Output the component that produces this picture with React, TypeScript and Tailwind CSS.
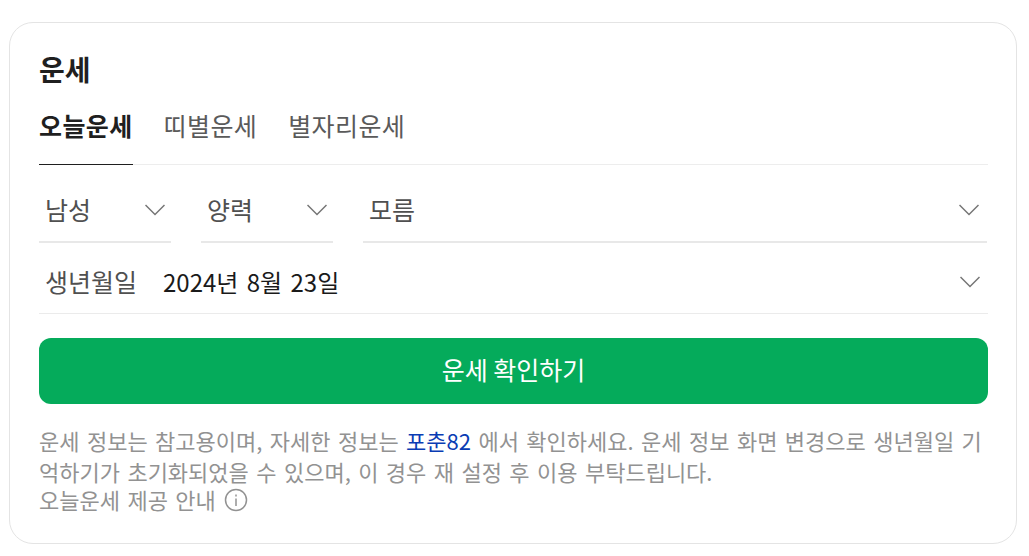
const font = { fontFamily: '"Noto Sans CJK KR", "Noto Sans", sans-serif' };

const Chevron = () => (
    <svg width="20" height="12" viewBox="0 0 20 12" fill="none" className="shrink-0">
        <path d="M0.5 1L10 10.5L19.5 1" stroke="#767676" strokeWidth="1.5" />
    </svg>
);

const SelectBox = ({ label, className }: { label: string; className: string }) => (
    <div className={`flex items-center justify-between h-[78px] pt-[13px] pl-[6px] border-b-2 border-[#e8e8e8] ${className}`}>
        <span className="text-[25px] text-[#505050]">{label}</span>
        <Chevron />
    </div>
);

export default function App() {
    return (
        <div className="bg-white min-h-[556px] pt-[22px] pl-[9px] pr-[12px]" style={font}>
            <div className="h-[522px] border border-[#e4e4e4] rounded-[24px] pl-[29px] pr-[28px] pt-[24px]">
                <h2 className="text-[28px] leading-[44px] font-bold text-[#1f1f1f]">운세</h2>

                {/* Tabs */}
                <div className="flex gap-[31px] h-[74px] border-b border-[#ededed] text-[25px] tracking-[0.4px]">
                    <div className="font-bold text-[#1f1f1f] border-b border-[#1f1f1f] h-[74px] pt-[8px] leading-[52px]">오늘운세</div>
                    <div className="text-[#5a5a5a] pt-[8px] leading-[52px]">띠별운세</div>
                    <div className="text-[#5a5a5a] pt-[8px] leading-[52px]">별자리운세</div>
                </div>

                {/* Filters */}
                <div className="flex gap-[30px] pr-[1px]">
                    <SelectBox label="남성" className="w-[132px] pr-[6px]" />
                    <SelectBox label="양력" className="w-[132px] pr-[6px]" />
                    <SelectBox label="모름" className="flex-1 pr-[8px]" />
                </div>

                {/* Birth date */}
                <div className="flex items-center h-[71px] pt-[8px] pl-[6px] pr-[8px] border-b border-[#ebebeb]">
                    <span className="text-[25px] text-[#505050] w-[118px]">생년월일</span>
                    <span className="text-[24px] text-[#1a1a1a] flex-1 [word-spacing:3px]">2024년 8월 23일</span>
                    <Chevron />
                </div>

                <button className="mt-[24px] w-full h-[66px] rounded-[12px] bg-[#05ab5b] text-white text-[25px] pb-[2px]">
                    운세 확인하기
                </button>

                <div className="mt-[21px] text-[22px] text-[#929292] [word-spacing:2.5px]">
                    <p className="leading-[31px] break-all">
                        운세 정보는 참고용이며, 자세한 정보는 <span className="text-[#0a3cb4]">포춘82</span> 에서 확인하세요. 운세 정보 화면 변경으로 생년월일 기억하기가 초기화되었을 수 있으며, 이 경우 재 설정 후 이용 부탁드립니다.
                    </p>
                    <div className="flex items-center gap-[8px] h-[25px]">
                        <span>오늘운세 제공 안내</span>
                        <svg width="24" height="24" viewBox="0 0 24 24" fill="none" className="shrink-0">
                            <circle cx="12" cy="12" r="10.5" stroke="#929292" strokeWidth="1.5" />
                            <path d="M12 10.5V18M12 6.5V8.5" stroke="#929292" strokeWidth="1.5" />
                        </svg>
                    </div>
                </div>
            </div>
        </div>
    );
}
